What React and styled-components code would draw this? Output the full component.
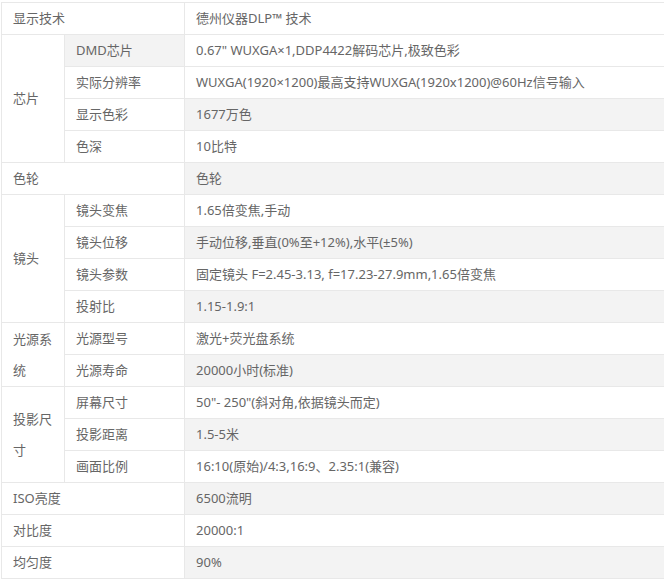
import React from "react";
import styled, { createGlobalStyle } from "styled-components";

const GlobalStyle = createGlobalStyle`
  html, body {
    margin: 0;
    padding: 0;
    background: #fff;
    overflow: hidden;
  }
  body {
    font-family: "Noto Sans", "Noto Sans CJK SC", sans-serif;
  }
`;

const Page = styled.div`
  padding: 2px 0 0 1px;
`;

const SpecTable = styled.table`
  width: 663px;
  border-collapse: collapse;
  table-layout: fixed;
  font-size: 13px;
  color: #666;

  tr:nth-child(even) td:nth-child(2) {
    background: #f3f3f3;
  }

  /* 表格右侧超出截图，不显示右边框 */
  td:last-child {
    border-right: none;
  }
`;

const Cell = styled.td`
  border: 1px solid #e8e8e8;
  height: 31px;
  line-height: 31px;
  padding: 0 11px;
  vertical-align: middle;
  white-space: ${props => (props.$wrap ? "normal" : "nowrap")};
  word-break: break-all;
`;

// 规格数据：group 有子项时第一列 rowspan
const specs = [
  { label: "显示技术", value: "德州仪器DLP™ 技术" },
  {
    label: "芯片",
    items: [
      ["DMD芯片", "0.67\" WUXGA×1,DDP4422解码芯片,极致色彩"],
      ["实际分辨率", "WUXGA(1920×1200)最高支持WUXGA(1920x1200)@60Hz信号输入"],
      ["显示色彩", "1677万色"],
      ["色深", "10比特"],
    ],
  },
  { label: "色轮", value: "色轮" },
  {
    label: "镜头",
    items: [
      ["镜头变焦", "1.65倍变焦,手动"],
      ["镜头位移", "手动位移,垂直(0%至+12%),水平(±5%)"],
      ["镜头参数", "固定镜头 F=2.45-3.13, f=17.23-27.9mm,1.65倍变焦"],
      ["投射比", "1.15-1.9:1"],
    ],
  },
  {
    label: "光源系统",
    items: [
      ["光源型号", "激光+荧光盘系统"],
      ["光源寿命", "20000小时(标准)"],
    ],
  },
  {
    label: "投影尺寸",
    items: [
      ["屏幕尺寸", "50\"- 250\"(斜对角,依据镜头而定)"],
      ["投影距离", "1.5-5米"],
      ["画面比例", "16:10(原始)/4:3,16:9、2.35:1(兼容)"],
    ],
  },
  { label: "ISO亮度", value: "6500流明" },
  { label: "对比度", value: "20000:1" },
  { label: "均匀度", value: "90%" },
];

const App = () => {
  const rows = [];
  specs.forEach(group => {
    if (!group.items) {
      rows.push(
        <tr key={group.label}>
          <Cell colSpan={2}>{group.label}</Cell>
          <Cell>{group.value}</Cell>
        </tr>
      );
      return;
    }
    group.items.forEach(([name, value], i) => {
      rows.push(
        <tr key={group.label + name}>
          {i === 0 && (
            <Cell rowSpan={group.items.length} $wrap>
              {group.label}
            </Cell>
          )}
          <Cell>{name}</Cell>
          <Cell>{value}</Cell>
        </tr>
      );
    });
  });

  return (
    <Page>
      <GlobalStyle />
      <SpecTable>
        <colgroup>
          <col style={{ width: 63 }} />
          <col style={{ width: 120 }} />
          <col />
        </colgroup>
        <tbody>{rows}</tbody>
      </SpecTable>
    </Page>
  );
};

export default App;
